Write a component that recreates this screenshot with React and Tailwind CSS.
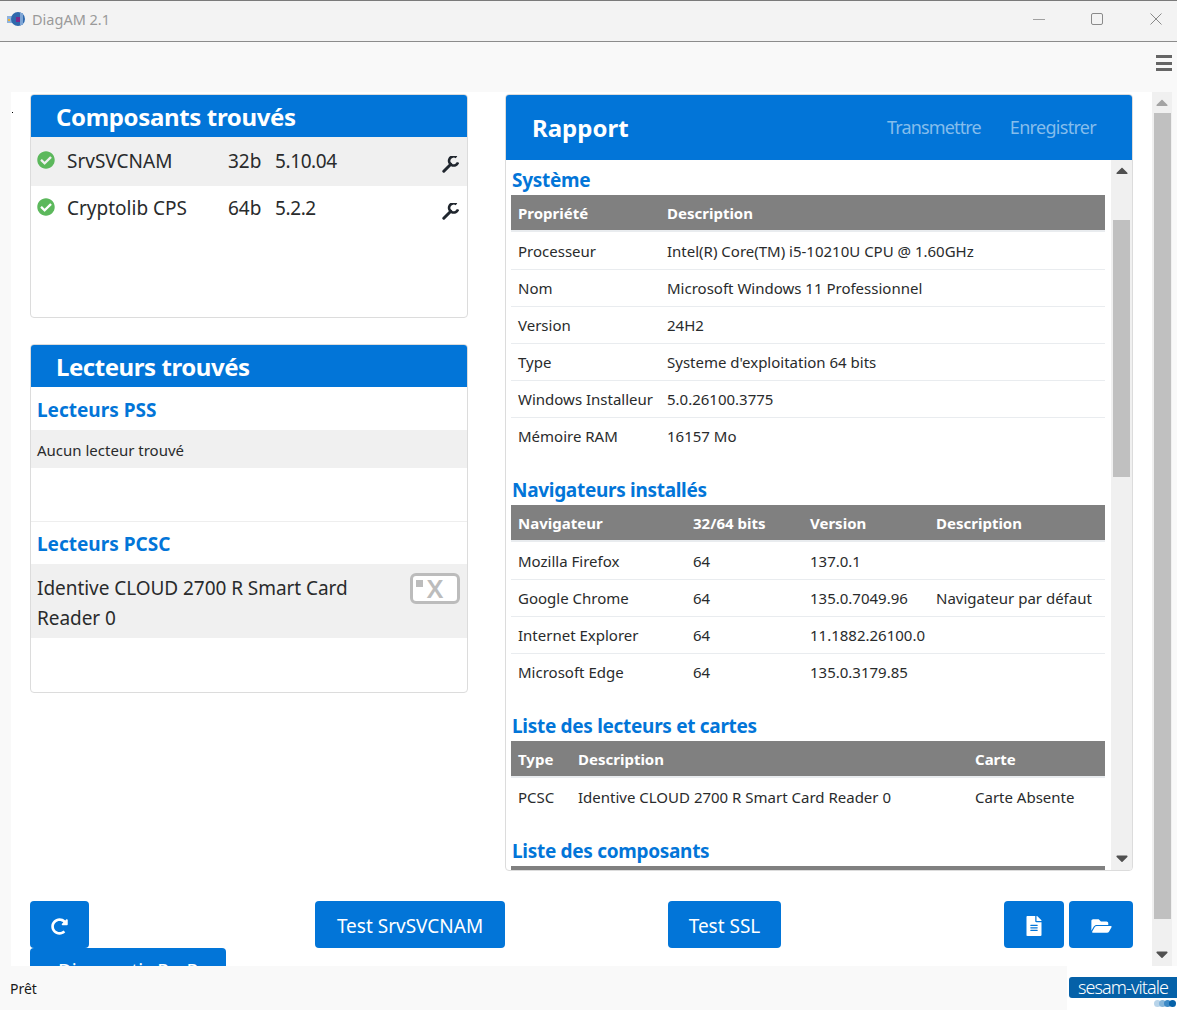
import { FaCheckCircle, FaRedoAlt, FaFileAlt, FaFolderOpen, FaCaretUp, FaCaretDown } from "react-icons/fa";

const font = { fontFamily: '"Noto Sans", "Open Sans", sans-serif' };

const sections = [
  {
    title: "Système",
    cols: ["w-[149px]", "flex-1"],
    head: ["Propriété", "Description"],
    rows: [
      ["Processeur", "Intel(R) Core(TM) i5-10210U CPU @ 1.60GHz"],
      ["Nom", "Microsoft Windows 11 Professionnel"],
      ["Version", "24H2"],
      ["Type", "Systeme d'exploitation 64 bits"],
      ["Windows Installeur", "5.0.26100.3775"],
      ["Mémoire RAM", "16157 Mo"],
    ],
  },
  {
    title: "Navigateurs installés",
    cols: ["w-[175px]", "w-[117px]", "w-[126px]", "flex-1"],
    head: ["Navigateur", "32/64 bits", "Version", "Description"],
    rows: [
      ["Mozilla Firefox", "64", "137.0.1", ""],
      ["Google Chrome", "64", "135.0.7049.96", "Navigateur par défaut"],
      ["Internet Explorer", "64", "11.1882.26100.0", ""],
      ["Microsoft Edge", "64", "135.0.3179.85", ""],
    ],
  },
  {
    title: "Liste des lecteurs et cartes",
    cols: ["w-[60px]", "w-[397px]", "flex-1"],
    head: ["Type", "Description", "Carte"],
    rows: [["PCSC", "Identive CLOUD 2700 R Smart Card Reader 0", "Carte Absente"]],
  },
];

const Report = ({ section }) => (
  <div className="mb-[16px]">
    <h3 className="h-[35px] pl-[6px] text-[19px] leading-[40px] font-bold text-[#0275d8] tracking-[-0.3px]">{section.title}</h3>
    <div className="ml-[5px] w-[594px]">
      <div className="flex h-[37px] items-center border-b-2 border-[#e9ecef] bg-[#808080] pl-[7px] pt-[2px] text-[15px] font-bold text-white">
        {section.head.map((h, i) => (
          <div key={h} className={section.cols[i]}>{h}</div>
        ))}
      </div>
      {section.rows.map((row, r) => (
        <div
          key={row[0]}
          className={`flex h-[37px] items-center pl-[7px] text-[15px] text-[#292b2c] ${r > 0 ? "border-t border-[#e9ecef]" : "pt-[2px]"}`}
        >
          {row.map((c, i) => (
            <div key={i} className={section.cols[i]}>{c}</div>
          ))}
        </div>
      ))}
    </div>
  </div>
);

const Wrench = () => (
  <svg className="mr-[8px] mt-[9px] shrink-0" width="17" height="17" viewBox="0 0 17 17">
    <path d="M1.8 15.2L8.8 8.2" stroke="#20262e" strokeWidth="3" strokeLinecap="round" fill="none" />
    <path d="M14.5 1.3A4.6 4.6 0 1 0 16 6.5" stroke="#20262e" strokeWidth="2.6" fill="none" />
  </svg>
);

const ComponentRow = ({ name, bits, version, shaded }) => (
  <div className={`flex items-start text-[19px] text-[#292b2c] ${shaded ? "h-[49px] bg-[#f0f0f0] pt-[10px]" : "h-[47px] pt-[8px]"}`}>
    <FaCheckCircle className="ml-[6px] mt-[4px] w-[18px] h-[18px] shrink-0 text-[#5cb85c]" />
    <span className="ml-[12px] w-[161px]">{name}</span>
    <span className="w-[47px]">{bits}</span>
    <span className="flex-1 tracking-[-0.4px]">{version}</span>
    <Wrench />
  </div>
);

const Scrollbar = ({ className, thumb, darkArrows }) => (
  <div className={`flex flex-col items-center bg-[#f0f0f0] ${className}`}>
    <FaCaretUp className={`h-[21px] w-[12px] shrink-0 ${darkArrows ? "text-[#505050]" : "text-[#a3a3a3]"}`} />
    {thumb}
    <div className="flex-1" />
    <FaCaretDown className="mb-[2px] h-[20px] w-[12px] shrink-0 text-[#505050]" />
  </div>
);

const Button = ({ children, className = "" }) => (
  <button className={`flex h-[47px] items-center justify-center whitespace-nowrap rounded-[4px] bg-[#0275d8] pt-[3px] text-[19px] text-white ${className}`}>
    {children}
  </button>
);

export default function App() {
  return (
    <div className="flex h-[1010px] w-[1177px] flex-col overflow-hidden bg-[#f9f9f9]" style={font}>
      {/* Title bar */}
      <div className="flex h-[42px] shrink-0 items-center border-y border-t-[#7a7a7a] border-b-[#8c8c8c] bg-[#f3f3f3] pb-[4px] pl-[6px]">
        <svg width="20" height="16" viewBox="0 0 20 16">
          <path d="M1 5h7v7H1z" fill="#8fb3dc" />
          <circle cx="12" cy="8" r="7" fill="#2f69ad" />
          <rect x="14" y="2" width="3" height="12" fill="#7fa6d6" />
          <rect x="10" y="6" width="4" height="5" fill="#7b2a8c" />
          <rect x="2" y="8" width="2" height="2" fill="#f0b030" />
        </svg>
        <span className="ml-[6px] mt-[2px] text-[14.5px] text-[#9a9a9a]">DiagAM 2.1</span>
        <div className="flex-1" />
        <div className="h-px w-[12px] bg-[#a0a0a0]" />
        <div className="ml-[46px] h-[12px] w-[12px] rounded-[2px] border border-[#8a8a8a]" />
        <svg className="ml-[47px] mr-[15px]" width="12" height="12" viewBox="0 0 12 12">
          <path d="M0.5 0.5l11 11M11.5 0.5l-11 11" stroke="#8a8a8a" fill="none" />
        </svg>
      </div>

      {/* Menu bar */}
      <div className="flex h-[50px] shrink-0 items-start justify-end pr-[5px] pt-[13px]">
        <div className="flex h-[16px] w-[16px] flex-col justify-between">
          <div className="h-[3px] bg-[#666666]" />
          <div className="h-[3px] bg-[#666666]" />
          <div className="h-[3px] bg-[#666666]" />
        </div>
      </div>

      {/* Main */}
      <div className="flex h-[874px] shrink-0 pl-[11px] pr-[5px]">
        <div className="relative flex w-[1161px] flex-col overflow-hidden bg-white pl-[19px]">
          <div className="absolute left-px top-[20px] h-px w-px bg-black" />
          <div className="flex h-[779px] shrink-0 pt-[2px]">
            {/* Left column */}
            <div className="w-[438px]">
              <div className="h-[224px] overflow-hidden rounded-[4px] border border-[#dcdcdc]">
                <div className="h-[42px] bg-[#0275d8] pl-[25px] text-[24px] leading-[43px] font-bold text-white tracking-[-0.35px]">Composants trouvés</div>
                <ComponentRow name="SrvSVCNAM" bits="32b" version="5.10.04" shaded />
                <ComponentRow name="Cryptolib CPS" bits="64b" version="5.2.2" />
              </div>
              <div className="mt-[26px] h-[349px] overflow-hidden rounded-[4px] border border-[#dcdcdc]">
                <div className="h-[42px] bg-[#0275d8] pl-[25px] text-[24px] leading-[43px] font-bold text-white tracking-[-0.45px]">Lecteurs trouvés</div>
                <div className="h-[43px] pl-[6px] text-[19px] leading-[47px] font-bold text-[#0275d8]">Lecteurs PSS</div>
                <div className="h-[38px] bg-[#f0f0f0] pl-[6px] text-[15px] leading-[40px] text-[#292b2c]">Aucun lecteur trouvé</div>
                <div className="h-[54px] border-b border-[#eeeeee]" />
                <div className="h-[42px] pl-[6px] text-[19px] leading-[44px] font-bold text-[#0275d8]">Lecteurs PCSC</div>
                <div className="flex h-[74px] justify-between bg-[#f0f0f0] pl-[6px] pr-[7px] pt-[9px]">
                  <div className="w-[340px] text-[19px] leading-[30px] tracking-[-0.05px] text-[#292b2c]">Identive CLOUD 2700 R Smart Card Reader 0</div>
                  <div className="relative h-[31px] w-[50px] rounded-[6px] border-[3px] border-[#bcbcbc] bg-white text-center text-[26px] leading-[24px] font-semibold text-[#bcbcbc]">
                    <div className="absolute left-[3px] top-[4px] h-[7px] w-[7px] bg-[#bcbcbc]" />
                    X
                  </div>
                </div>
              </div>
            </div>

            {/* Report card */}
            <div className="ml-[37px] flex h-[777px] w-[628px] flex-col overflow-hidden rounded-[4px] border border-[#dcdcdc]">
              <div className="flex h-[65px] shrink-0 items-center bg-[#0275d8] pl-[26px]">
                <span className="flex-1 text-[24px] font-bold text-white">Rapport</span>
                <span className="text-[18px] text-[#85bdec] tracking-[-0.85px]">Transmettre</span>
                <span className="ml-[29px] mr-[36px] text-[18px] text-[#85bdec] tracking-[-0.7px]">Enregistrer</span>
              </div>
              <div className="flex min-h-0 flex-1">
                <div className="min-w-0 flex-1 overflow-hidden">
                  {sections.map((s) => (
                    <Report key={s.title} section={s} />
                  ))}
                  <h3 className="h-[35px] pl-[6px] text-[19px] leading-[40px] font-bold text-[#0275d8] tracking-[-0.3px]">Liste des composants</h3>
                  <div className="ml-[5px] h-[5px] w-[594px] bg-[#808080]" />
                </div>
                <Scrollbar
                  className="w-[21px] shrink-0"
                  darkArrows
                  thumb={<div className="mt-[39px] h-[257px] w-[17px] shrink-0 bg-[#c0c0c0]" />}
                />
              </div>
            </div>
          </div>

          {/* Buttons */}
          <div className="mt-[30px] flex h-[47px] w-[1103px] shrink-0">
            <Button className="w-[59px]"><FaRedoAlt className="h-[17px] w-[17px]" /></Button>
            <Button className="ml-[226px] w-[190px]">Test SrvSVCNAM</Button>
            <Button className="ml-[163px] w-[113px]">Test SSL</Button>
            <Button className="ml-[223px] w-[60px]"><FaFileAlt className="h-[20px] w-[18px]" /></Button>
            <Button className="ml-[5px] w-[64px] shrink-0"><FaFolderOpen className="h-[18px] w-[23px]" /></Button>
          </div>
          <Button className="w-[196px] shrink-0"><span className="-mt-[4px]">Diagnostic PmP</span></Button>

          <Scrollbar
            className="absolute right-0 top-0 h-full w-[20px]"
            thumb={<div className="h-[806px] w-[17px] shrink-0 bg-[#c0c0c0]" />}
          />
        </div>
      </div>

      {/* Status bar */}
      <div className="flex min-h-0 flex-1 items-start pl-[10px]">
        <span className="mt-[12px] text-[14px] text-[#1a1a1a]">Prêt</span>
        <div className="flex-1" />
        <div className="flex h-full w-[110px] flex-col items-end bg-white pt-[11px]">
          <div className="h-[21px] w-[108px] rounded-l-[3px] bg-[#0561a8] text-center text-[18px] leading-[21px] font-light text-white tracking-[-0.9px]">sesam-vitale</div>
          <div className="mr-[1px] mt-[2px] flex -space-x-[2px]">
            <div className="h-[7px] w-[7px] rounded-full bg-[#b8d4ea]" />
            <div className="h-[7px] w-[7px] rounded-full bg-[#84b5da]" />
            <div className="h-[7px] w-[7px] rounded-full bg-[#3d8ac6]" />
            <div className="h-[7px] w-[7px] rounded-full bg-[#0561a8]" />
          </div>
        </div>
      </div>
    </div>
  );
}
